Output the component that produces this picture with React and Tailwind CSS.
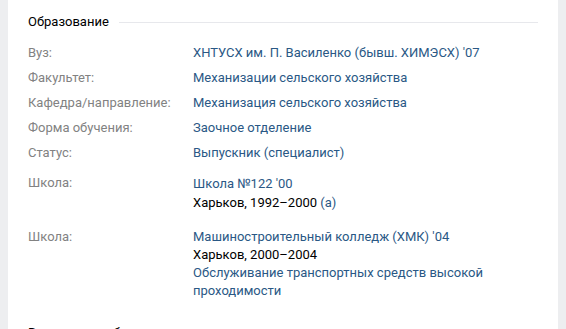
export default function App() {
  const rows = [
    ['Вуз:', 'ХНТУСХ им. П. Василенко (бывш. ХИМЭСХ) \'07'],
    ['Факультет:', 'Механизации сельского хозяйства'],
    ['Кафедра/направление:', 'Механизация сельского хозяйства'],
    ['Форма обучения:', 'Заочное отделение'],
    ['Статус:', 'Выпускник (специалист)'],
  ]

  return (
    <div
      className="flex h-[329px] w-[566px] overflow-hidden bg-[#edeef0] px-2 text-[13px] leading-[18px]"
      style={{ fontFamily: 'Roboto, "Open Sans", sans-serif' }}
    >
      <div className="flex-1 bg-white px-5 pt-[13px]">
        {/* Section header */}
        <div className="flex items-center">
          <span className="text-[#000] pr-[10px]">Образование</span>
          <div className="mt-[1px] h-px flex-1 bg-[#e7e8ec]" />
        </div>

        <div className="mt-[13px]">
          {rows.map(([label, value]) => (
            <div key={label} className="flex h-[25px]">
              <div className="w-[165px] shrink-0 text-[#828282]">{label}</div>
              <div className="text-[#2a5885]">{value}</div>
            </div>
          ))}
        </div>

        {/* Schools */}
        <div className="mt-[5px] flex">
          <div className="w-[165px] shrink-0 text-[#828282]">Школа:</div>
          <div className="leading-[19px]">
            <div className="text-[#2a5885]">Школа №122 '00</div>
            <div className="text-black">
              Харьков, 1992–2000 <span className="text-[#2a5885]">(а)</span>
            </div>
          </div>
        </div>

        <div className="mt-[16px] flex">
          <div className="w-[165px] shrink-0 text-[#828282]">Школа:</div>
          <div>
            <div className="text-[#2a5885]">Машиностроительный колледж (ХМК) '04</div>
            <div className="text-black">Харьков, 2000–2004</div>
            <div className="text-[#2a5885]">
              Обслуживание транспортных средств высокой
              <br />
              проходимости
            </div>
          </div>
        </div>

        <div className="mt-[24px] flex items-center">
          <span className="text-[#000] pr-[10px]">Военная служба</span>
          <div className="mt-[1px] h-px flex-1 bg-[#e7e8ec]" />
        </div>
      </div>
    </div>
  )
}
